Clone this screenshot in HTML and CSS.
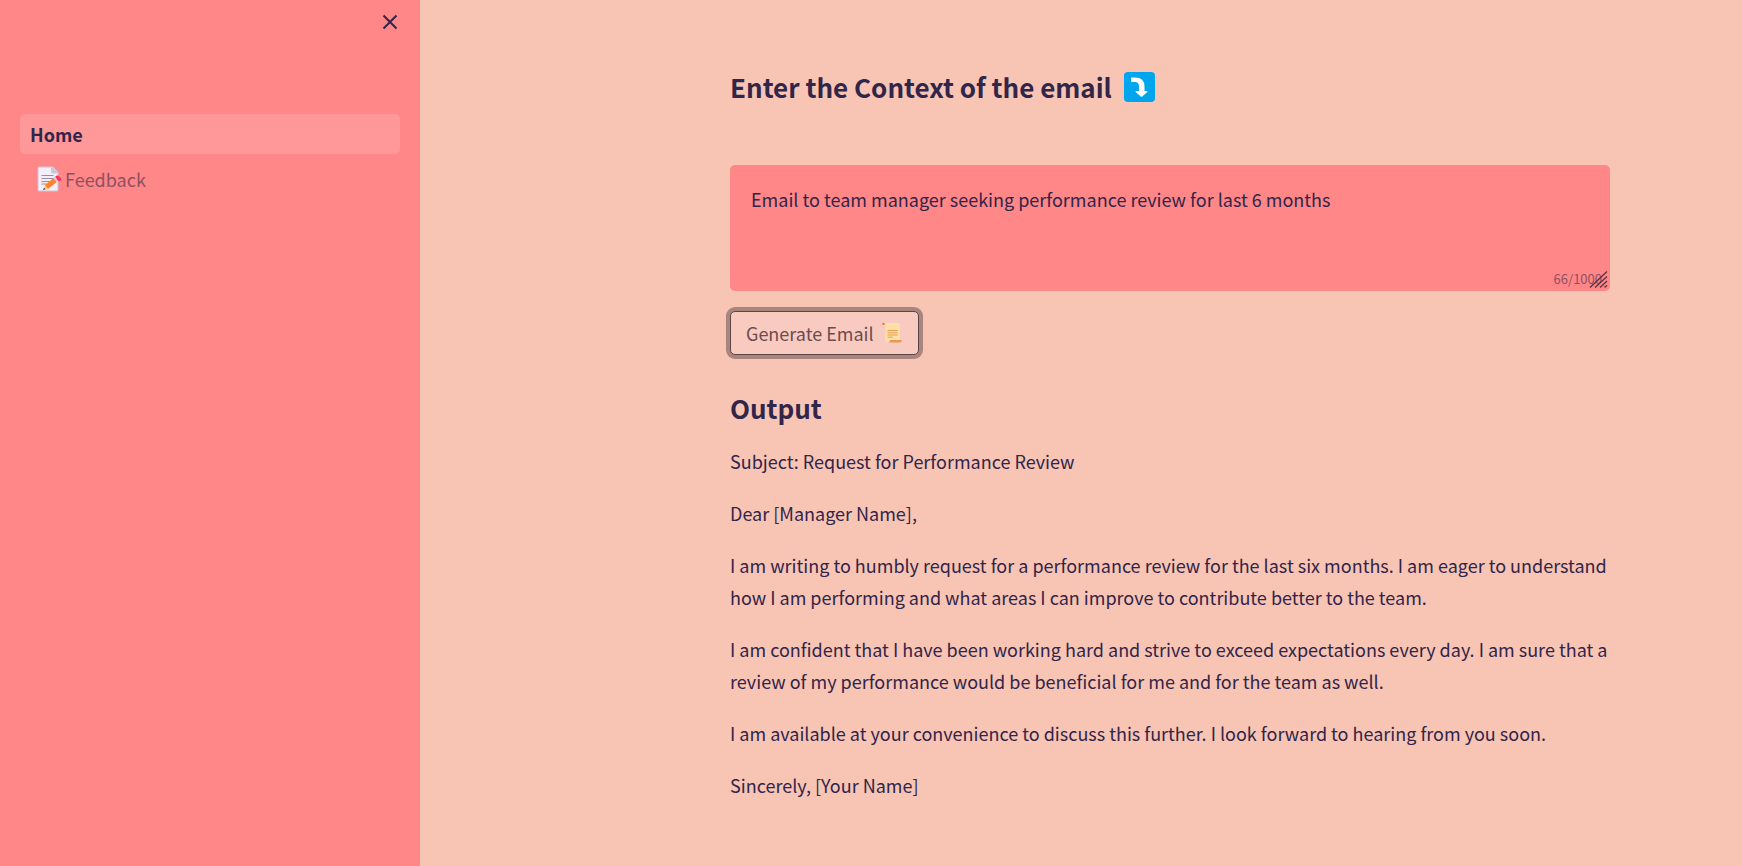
FILE: index.html
```html
<!DOCTYPE html>
<html lang="en">
<head>
<meta charset="utf-8">
<title>Home</title>
<link rel="stylesheet" href="styles.css">
</head>
<body>
<div class="app">
  <aside class="sidebar">
    <button class="close" type="button" aria-label="Close sidebar">
      <svg width="16" height="16" viewBox="0 0 16 16" aria-hidden="true"><path d="M1.500 1.500 14.500 14.500M14.500 1.500 1.500 14.500" stroke="#31254a" stroke-width="2" fill="none"/></svg>
    </button>
    <nav class="nav">
      <a class="nav-link active" href="#home">Home</a>
      <a class="nav-link" href="#feedback">
        <svg class="memo" width="25" height="26" viewBox="0 0 25 26" aria-hidden="true">
          <path d="M2 1h14l5 5v18q0 1-1 1H2q-1 0-1-1V2q0-1 1-1z" fill="#f3eef8" stroke="#cdc4d6"/>
          <path d="M14 1.500h2l4.500 4.500v1.500h-4.500q-2 0-2-2z" fill="#cdc4d6"/>
          <path d="M4.500 9.500h12M4.500 12.500h12M4.500 15.500h9M4.500 18h5" stroke="#998ea4" fill="none"/>
          <path d="M6 24 8 19 11 23z" fill="#ffd05c"/><path d="M6 24l1-2.200 1.500 1.500z" fill="#433b6b"/>
          <path d="M8 19 16.500 12 19.800 16 11 23z" fill="#ff822d"/>
          <path d="M16.500 12l2-1.700 3.300 4-2 1.700z" fill="#dcc6d8"/>
          <path d="M18.300 10.500q2-2 4 0l2 2.500q0 2-2 2.200-1 .1-1.500-.7z" fill="#f8315f"/>
        </svg>
        <span>Feedback</span>
      </a>
    </nav>
  </aside>
  <main class="main">
    <form class="content">
      <h2 class="title"><label for="context">Enter the Context of the email</label>
        <svg width="32" height="30" viewBox="0 0 32 30" aria-hidden="true">
          <rect width="31" height="30" rx="4" fill="#00a6ed"/>
          <path d="M7 5.500h4q9.500 0 9.500 9V19h2.500q.9.300.3 1.100l-5 4.500q-.8.500-1.600 0l-5-4.500q-.6-.8.300-1.100H15v-4.500q0-4.500-4-4.500H7.800Q7 10 7 9z" fill="#fff"/>
        </svg>
      </h2>
      <div class="field">
        <textarea class="context" id="context" maxlength="1000">Email to team manager seeking performance review for last 6 months</textarea>
        <span class="count">66/1000</span>
        <svg class="grip" width="20" height="19" viewBox="0 0 20 19" aria-hidden="true"><path d="M1 17.500 18 1.500M6 17.500l12-11M11 17.500l7-6.500M15.500 17.500l2.500-2.300" stroke="#5d3540" stroke-width="1.400" fill="none"/></svg>
      </div>
      <button class="generate" type="button">
        <span>Generate Email</span>
        <svg width="22" height="22" viewBox="0 0 22 22" aria-hidden="true">
          <path d="M2 1h15q2 0 2 2v15H5q-1 0-1-1V4Q4 2 2 1z" fill="#ffdea7"/>
          <path d="M4 17h5v3H6q-2 0-2-2z" fill="#ffdea7"/>
          <path d="M1.500.8q2.500-.6 2.500 2H1.500q-1-1 0-2z" fill="#d3883e"/>
          <path d="M6.500 8.500h10M6.500 10.800h10M6.500 13h10M6.500 15.200h5" stroke="#e39d4e" fill="none"/>
          <path d="M9 18h11.500q.6 2.500-2 2.500H7.500q1.500-.4 1.500-2.500z" fill="#e39d4e"/>
        </svg>
      </button>
      <h2 class="output-title">Output</h2>
      <div class="output">
        <p>Subject: Request for Performance Review</p>
        <p>Dear [Manager Name],</p>
        <p>I am writing to humbly request for a performance review for the last six months. I am eager to understand how I am performing and what areas I can improve to contribute better to the team.</p>
        <p>I am confident that I have been working hard and strive to exceed expectations every day. I am sure that a review of my performance would be beneficial for me and for the team as well.</p>
        <p>I am available at your convenience to discuss this further. I look forward to hearing from you soon.</p>
        <p>Sincerely, [Your Name]</p>
      </div>
    </form>
  </main>
</div>
</body>
</html>
```
FILE: styles.css
```css
* { box-sizing: border-box; }
body {
  margin: 0;
  background: #f8c4b4;
  color: #31254a;
  font-family: "Source Sans Pro", "Noto Sans CJK SC", sans-serif;
  font-size: 18px;
  line-height: 32px;
}
button, textarea { font: inherit; color: inherit; }
.app { display: flex; min-height: 100vh; }
.sidebar {
  flex: 0 0 420px;
  display: flex;
  flex-direction: column;
  padding: 10px 20px;
  background: #ff8787;
}
.close {
  display: flex;
  align-self: flex-end;
  padding: 4px 2px;
  border: 0;
  background: none;
}
.nav { display: flex; flex-direction: column; gap: 5px; margin-top: 80px; }
.nav-link {
  display: flex;
  align-items: center;
  height: 40px;
  padding: 0 10px;
  border-radius: 5px;
  color: #914f63;
  text-decoration: none;
}
.active { background: #ff9999; color: #31254a; font-weight: 700; }
.memo { margin: 0 3px 0 7px; }
.main {
  flex: 1;
  display: grid;
  grid-template-columns: 310fr 880fr 132fr;
  align-items: start;
  padding: 69px 0 60px;
}
.content { grid-column: 2; min-width: 0; }
.title, .output-title { margin: 0; font-size: 26px; line-height: 36px; font-weight: 700; }
.title { display: flex; align-items: center; gap: 12px; margin-bottom: 60px; }
.field { position: relative; display: flex; }
.context {
  width: 100%;
  height: 126px;
  padding: 18px 21px;
  border: 0;
  border-radius: 5px;
  outline: 0;
  resize: none;
  background: #ff8787;
}
.count {
  position: absolute;
  right: 8px;
  bottom: 2px;
  font-size: 13px;
  line-height: 20px;
  color: #914f63;
}
.grip { position: absolute; right: 1px; bottom: 2px; }
.generate {
  display: flex;
  align-items: center;
  gap: 7px;
  height: 44px;
  margin: 20px 0 35px;
  padding: 0 15px;
  border: 1px solid #5c4548;
  border-radius: 5px;
  background: #f9cac0;
  color: #6b4c50;
  box-shadow: 0 0 0 4px #aa857d;
}
.output-title { margin-bottom: 19px; }
.output p { margin: 0 0 20px; }
```
